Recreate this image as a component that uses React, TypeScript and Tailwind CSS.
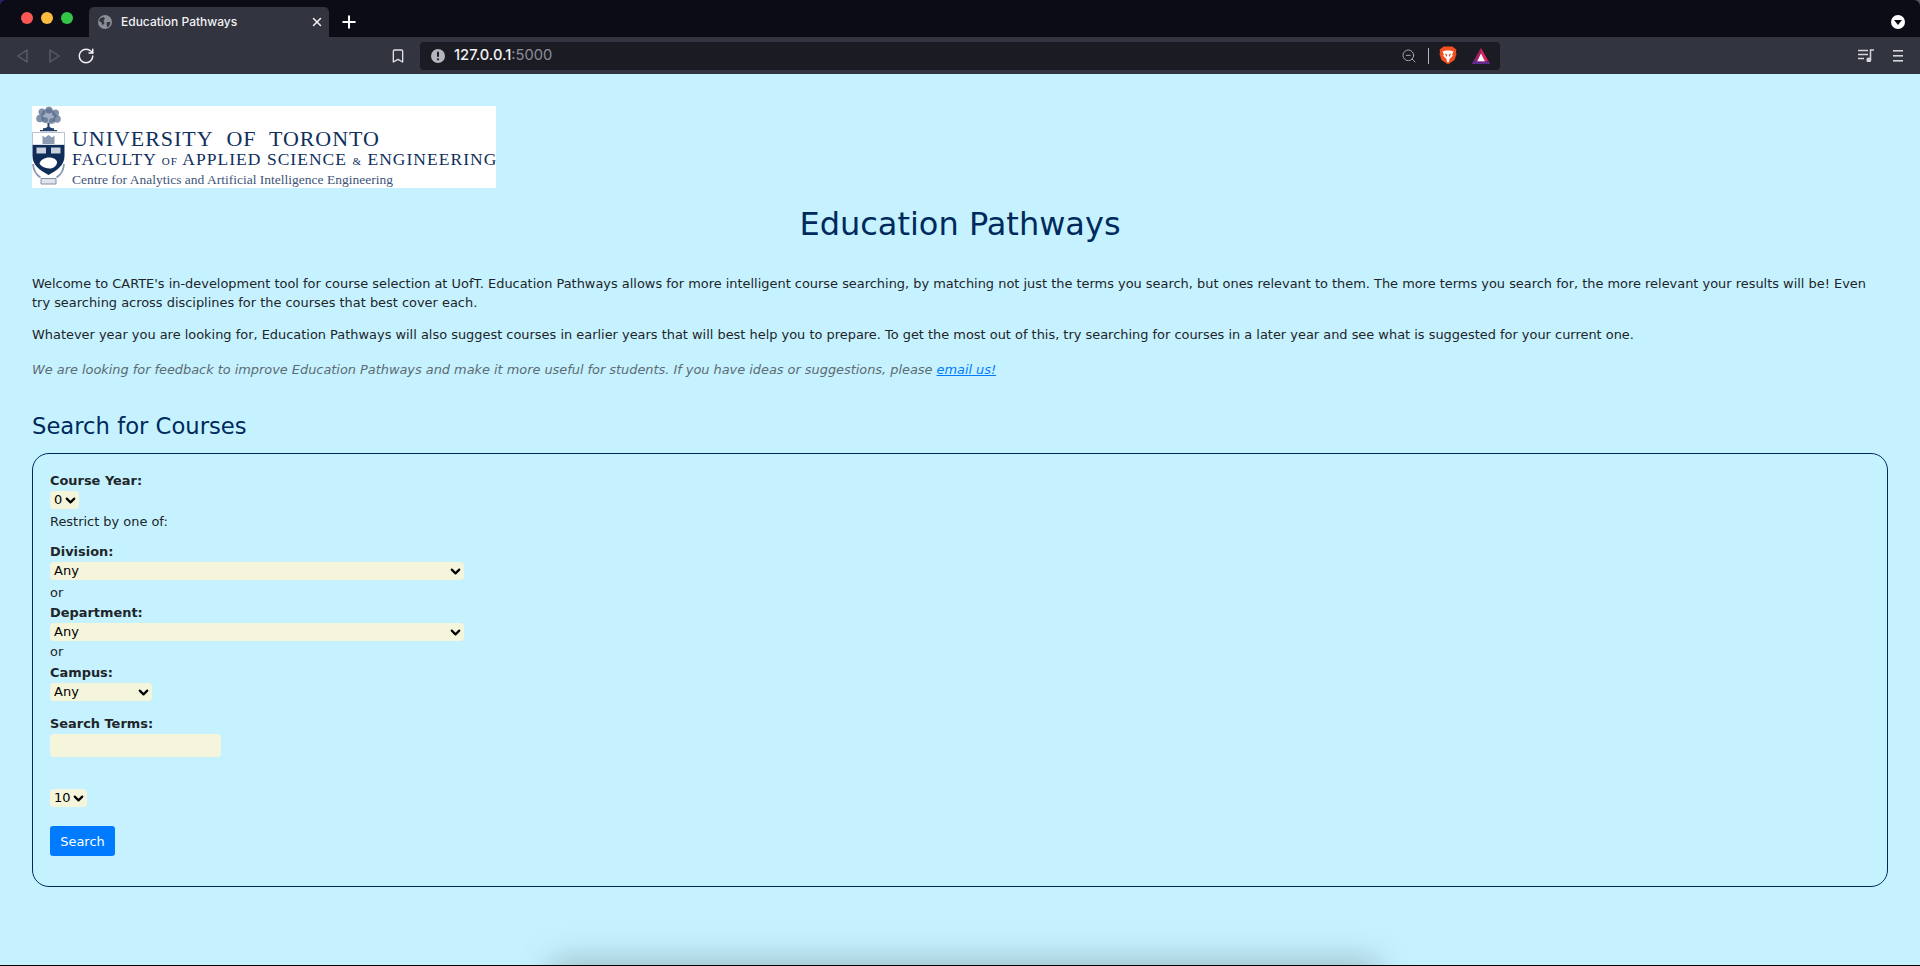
import { Bookmark, ChevronDown, Plus, RotateCw, X, ZoomOut } from "lucide-react";

const Dots = () => (
  <div className="flex w-[89px] shrink-0 gap-[8px] pl-[21px] pt-[12px]">
    <span className="h-3 w-3 rounded-full bg-[#fc5753]" />
    <span className="h-3 w-3 rounded-full bg-[#fdbc40]" />
    <span className="h-3 w-3 rounded-full bg-[#33c748]" />
  </div>
);

const TabGlobe = () => (
  <svg className="h-[14px] w-[14px] shrink-0" viewBox="0 0 14 14">
    <circle cx="7" cy="7" r="7" fill="#8b8e97" />
    <path d="M2 3.5 5.5 2 7 3.5 5.5 5.5 6.5 8 4.5 10.5 3.5 7.5 1 6ZM9 7h3.5L11.5 10.5 9.5 12.5 8.5 9.5Z" fill="#32343f" />
  </svg>
);

const NavArrow = ({ flip }: { flip?: boolean }) => (
  <svg className={flip ? "h-[14px] w-[11px] rotate-180" : "h-[14px] w-[11px]"} viewBox="0 0 11 14" fill="none">
    <path d="M10 1v12L1 7Z" stroke="#5c5f6a" strokeWidth="1.4" strokeLinejoin="round" />
  </svg>
);

const SiteAlert = () => (
  <svg className="h-[14px] w-[14px] shrink-0" viewBox="0 0 14 14">
    <circle cx="7" cy="7" r="7" fill="#b4b6bc" />
    <rect x="6" y="2.5" width="2" height="5.5" rx="1" fill="#1b1c23" />
    <circle cx="7" cy="10.3" r="1.1" fill="#1b1c23" />
  </svg>
);

const BraveLion = () => (
  <svg className="h-[19px] w-[18px]" viewBox="0 0 18 19">
    <path d="M4.500 0.500h9l2.500 2 1.500 1.500-.6 2 .6 2-2 6-6.500 4.500L2.500 14l-2-6 .6-2-.6-2L2 2.500Z" fill="#f0501f" />
    <path d="M3.500 5.500 6.500 4.500h5l3 1-1.500 3.500 1 .5-3.500 3.500-.5 3H8l-.5-3L4 9.500l1-.5Z" fill="#fff" />
    <path d="M6 7.500 8 8.500V10.500H7ZM12 7.500 10 8.500V10.500H11Z" fill="#f0501f" />
  </svg>
);

const BatTriangle = () => (
  <svg className="h-[16px] w-[18px]" viewBox="0 0 18 16">
    <path d="M9 0 18 16H0Z" fill="#e0245e" />
    <path d="M9 0 0 16h6L9 9.500Z" fill="#9e1f63" />
    <path d="M3 11 0 16h18l-2.200-4-1.800 1.600H5Z" fill="#5f2a90" />
    <path d="M9 5.500 12.800 13.200H5.200Z" fill="#fff" />
  </svg>
);

const Playlist = () => (
  <svg className="h-[13px] w-[16px]" viewBox="0 0 16 13" fill="none" stroke="#d5d6da" strokeWidth="1.500">
    <path d="M0 1.500h10M0 5.500h10M0 9.500h6" />
    <path d="M12.500 11V1h3.500" />
    <circle cx="10.800" cy="11" r="1.700" fill="#d5d6da" />
  </svg>
);

const Hamburger = () => (
  <svg className="h-[12px] w-[10px]" viewBox="0 0 10 12" fill="#d5d6da">
    <rect y="0" width="10" height="1.600" />
    <rect y="5" width="10" height="1.600" />
    <rect y="10" width="10" height="1.600" />
  </svg>
);

const BrowserChrome = () => (
  <header className="shrink-0 bg-[linear-gradient(90deg,#23236e_50%,#55555f_50%)]">
    <div className="flex h-[37px] rounded-t-[6px] bg-[#0b0c16]">
      <Dots />
      <div className="mt-[7px] flex h-[30px] w-[240px] items-center rounded-t-[5px] bg-[#32343f] pl-[9px] pr-[5px] text-[12px] font-medium text-[#f1f1f3]">
        <TabGlobe />
        <span className="ml-[9px] flex-1 font-['Inter',sans-serif]">Education Pathways</span>
        <X size={14} color="#f1f1f3" strokeWidth={2.500} />
      </div>
      <div className="ml-[10px] mt-[12px]">
        <Plus size={20} color="#fff" strokeWidth={2.400} />
      </div>
      <div className="ml-auto mr-[15px] mt-[15px] flex h-[14px] w-[14px] items-center justify-center rounded-full bg-white">
        <span className="h-0 w-0 border-x-[4px] border-t-[5px] border-x-transparent border-t-[#0b0c16]" />
      </div>
    </div>
    <div className="flex h-[37px] items-center bg-[#32343f]">
      <div className="flex w-[406px] items-center">
        <div className="ml-[17px] flex items-center gap-[21px]">
          <NavArrow />
          <NavArrow flip />
        </div>
        <RotateCw className="ml-[17px]" size={18} color="#f1f1f3" strokeWidth={2} />
        <Bookmark className="ml-auto" size={16} color="#e1e2e5" strokeWidth={2} />
      </div>
      <div className="ml-[14px] flex h-[28px] w-[1080px] items-center rounded-[4px] bg-[#1b1c23] pl-[11px] pr-[10px]">
        <SiteAlert />
        <span className="ml-[9px] font-['Inter',sans-serif] text-[14.700px] font-medium text-[#f1f1f3]">
          127.0.0.1<span className="font-normal text-[#8b8e97]">:5000</span>
        </span>
        <ZoomOut className="ml-auto" size={16} color="#a5a7ad" strokeWidth={1.500} />
        <span className="ml-[11px] h-[16px] w-px bg-[#b4b6bc]" />
        <span className="ml-[10px] flex"><BraveLion /></span>
        <span className="ml-[15px] flex"><BatTriangle /></span>
      </div>
      <div className="ml-auto mr-[17px] flex items-center gap-[19px]">
        <Playlist />
        <Hamburger />
      </div>
    </div>
  </header>
);

const Crest = () => (
  <svg className="h-[82px] w-[33px] shrink-0" viewBox="0 0 33 82">
    <g fill="#4a6285">
      <circle cx="16.500" cy="10" r="7.500" opacity="0.500" />
      <circle cx="10" cy="6" r="3.500" opacity="0.700" />
      <circle cx="17" cy="4" r="3.500" opacity="0.700" />
      <circle cx="23.500" cy="7" r="3.500" opacity="0.700" />
      <circle cx="8" cy="12.500" r="3.800" opacity="0.700" />
      <circle cx="25" cy="13" r="3.800" opacity="0.700" />
      <circle cx="13" cy="14" r="3" opacity="0.600" />
      <circle cx="20" cy="15" r="3" opacity="0.600" />
    </g>
    <path d="M15.500 17h2v6h-2ZM11 22c2 .5 3.500 0 4.500-1.500h2c1 1.500 2.500 2 4.500 1.500v2H11ZM8 24h17v1.200H8Z" fill="#23426d" />
    <path d="M.5 26.500h32v12.500H.5Z" fill="#fff" stroke="#9aa8bb" strokeWidth="0.700" />
    <path d="M10.500 29.500l2.500 2 3.500-2.500 3.500 2.500 2.500-2v8.500h-12Z" fill="#8b9ab0" />
    <path d="M.5 39h32v11c0 9-7 14-16 19C7.500 64 .5 59 .5 50Z" fill="#0e2d59" />
    <path d="M4.500 41.500h9.500v6H4.500ZM19 41.500h9.500v6H19Z" fill="#c8d1dd" />
    <path d="M7.500 57.500c1-4 6-6.500 11-6 4 .5 7 3 6.500 5.500-1 4.500-6 6.500-11 5-3-1-5.500-2-6.500-4.500Z" fill="#fff" />
    <path d="M1 58c.500 7 3.500 11 7.500 13.500M32 58c-.500 7-3.500 11-7.500 13.500" fill="none" stroke="#8a9ab0" strokeWidth="1.800" />
    <path d="M9 72.500h15v5.500H9Z" fill="#dfe4ea" stroke="#7f90a8" strokeWidth="1" />
  </svg>
);

const Logo = () => (
  <div className="flex h-[82px] w-[464px] overflow-hidden bg-white font-['Liberation_Serif',serif]">
    <Crest />
    <div className="ml-[7px] whitespace-nowrap pt-[22px] text-[#0f2f5c]">
      <div className="h-[21px] text-[22px] leading-[21px] tracking-[0.950px]">UNIVERSITY&nbsp; OF&nbsp; TORONTO</div>
      <div className="h-[20px] text-[17.500px] leading-[20px] tracking-[1.030px]">
        FACULTY <span className="text-[11px]">OF</span> APPLIED SCIENCE <span className="text-[11px]">&amp;</span> ENGINEERING
      </div>
      <div className="mt-[2px] h-[17px] text-[13.500px] leading-[17px] text-[#3d5578]">
        Centre for Analytics and Artificial Intelligence Engineering
      </div>
    </div>
  </div>
);

type SelectProps = {
  options: string;
  widthClass: string;
};

const FieldSelect = ({ options, widthClass }: SelectProps) => (
  <div className={`relative h-[18px] ${widthClass}`}>
    <select className="block h-[18px] w-full appearance-none rounded-[4px] bg-[#f5f5dc] pl-[4px] text-[13px] leading-[18px] text-black outline-none">
      <option>{options}</option>
    </select>
    <ChevronDown className="pointer-events-none absolute right-[1px] top-[1.500px]" size={15} color="#000" strokeWidth={3.500} />
  </div>
);

const Label = ({ children }: { children: string }) => (
  <div className="h-[20px] text-[12.930px] font-bold leading-[20px]">{children}</div>
);

const Plain = ({ children }: { children: string }) => (
  <div className="h-[20px] text-[12.930px] leading-[20px]">{children}</div>
);

const SearchForm = () => (
  <form className="mt-[12px] h-[434px] rounded-[17px] border border-[#002a5c] px-[17px] pt-[17px] text-[#212529]">
    <Label>Course Year:</Label>
    <FieldSelect options="0" widthClass="w-[29px]" />
    <div className="mt-[3px]"><Plain>Restrict by one of:</Plain></div>
    <div className="mt-[10px]"><Label>Division:</Label></div>
    <FieldSelect options="Any" widthClass="w-[414px]" />
    <div className="mt-[3px]"><Plain>or</Plain></div>
    <Label>Department:</Label>
    <FieldSelect options="Any" widthClass="w-[414px]" />
    <div className="mt-[1px]"><Plain>or</Plain></div>
    <div className="mt-[1px]"><Label>Campus:</Label></div>
    <FieldSelect options="Any" widthClass="w-[102px]" />
    <div className="mt-[13px]"><Label>Search Terms:</Label></div>
    <input className="block h-[23px] w-[171px] rounded-[4px] bg-[#f5f5dc] outline-none" />
    <div className="mt-[32px]">
      <FieldSelect options="10" widthClass="w-[37px]" />
    </div>
    <button className="mt-[19px] block h-[30px] w-[65px] rounded-[3px] bg-[#007bff] pt-[1px] text-[12.930px] text-white" type="button">
      Search
    </button>
  </form>
);

export default function App() {
  return (
    <div className="relative flex h-[966px] w-[1920px] flex-col overflow-hidden bg-[#c6f2ff] font-['DejaVu_Sans',sans-serif]">
      <BrowserChrome />
      <main className="px-[32px] pt-[32px]">
        <Logo />
        <h1 className="mt-[16px] text-center text-[32px] leading-[40px] text-[#002a5c]">Education Pathways</h1>
        <p className="mt-[30px] text-[12.930px] leading-[19px] tracking-[0.001px] text-[#212529]">
          Welcome to CARTE's in-development tool for course selection at UofT. Education Pathways allows for more intelligent course searching, by matching not just the terms you search, but ones relevant to them. The more terms you search for, the more relevant your results will be! Even
          <br />
          try searching across disciplines for the courses that best cover each.
        </p>
        <p className="mt-[13px] text-[12.930px] leading-[19px] text-[#212529]">
          Whatever year you are looking for, Education Pathways will also suggest courses in earlier years that will best help you to prepare. To get the most out of this, try searching for courses in a later year and see what is suggested for your current one.
        </p>
        <p className="mt-[16px] text-[12.930px] italic leading-[19px] tracking-[-0.025px] text-[#5c6b73]">
          We are looking for feedback to improve Education Pathways and make it more useful for students. If you have ideas or suggestions, please <a className="text-[#007bff] underline" href="#">email us!</a>
        </p>
        <h2 className="mt-[32px] text-[22.700px] leading-[30px] text-[#002a5c]">Search for Courses</h2>
        <SearchForm />
      </main>
      <div className="pointer-events-none absolute bottom-[-34px] left-[550px] h-[40px] w-[830px] rounded-[10px] bg-black/22 blur-[16px]" />
      <div className="absolute bottom-0 left-0 h-px w-full bg-black" />
    </div>
  );
}
